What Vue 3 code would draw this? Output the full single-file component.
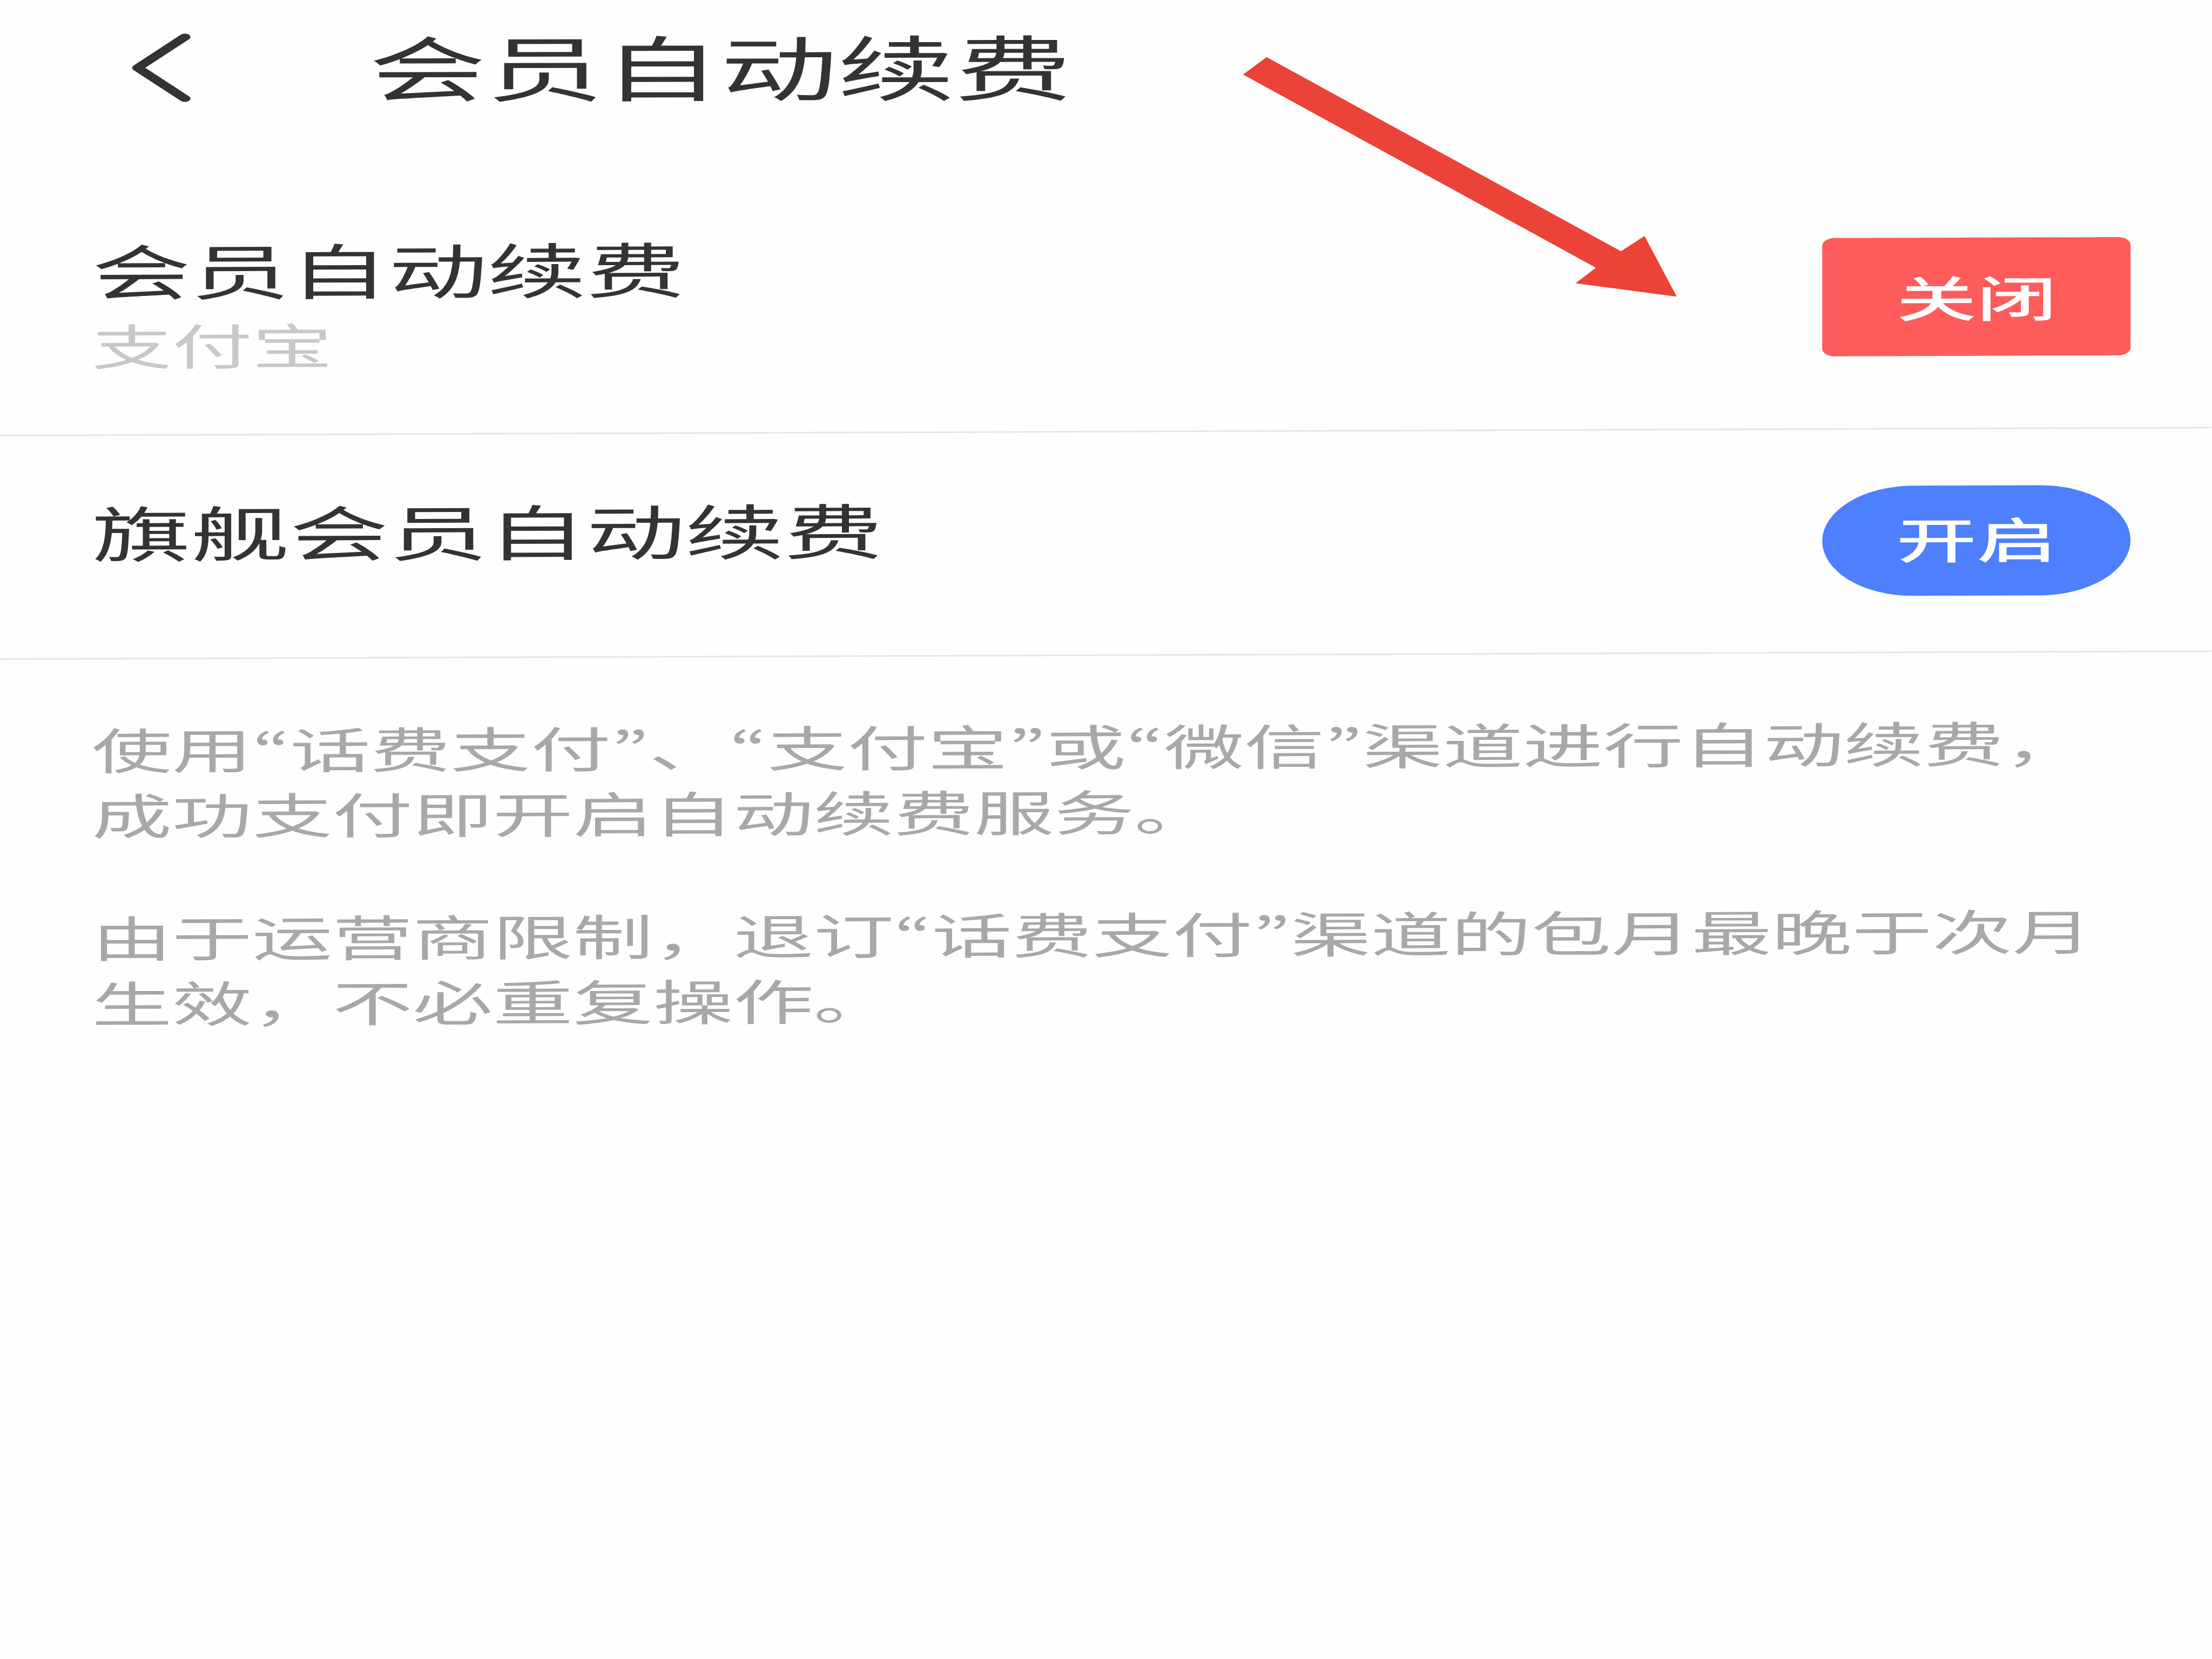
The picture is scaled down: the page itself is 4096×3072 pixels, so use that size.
<template>
    <div class="container">
        <div class="header">
            <svg class="back" viewBox="0 0 66 128" width="66" height="128">
                <polyline points="59.5,7 6.5,64 59.5,121" />
            </svg>
            <h1>会员自动续费</h1>
        </div>

        <div class="content">
            <div v-for="item in plans" :key="item.name" class="row" :class="item.type">
                <div class="info">
                    <p class="name">{{ item.name }}</p>
                    <p v-if="item.channel" class="channel">{{ item.channel }}</p>
                </div>
                <button class="btn">{{ item.action }}</button>
            </div>

            <div class="notes">
                <p v-for="(lines, i) in notes" :key="i">
                    <span v-for="line in lines" :key="line" class="line"><span v-for="(part, j) in splitQuotes(line)" :key="j" :class="{quote : isQuote(part)}">{{ part }}</span></span>
                </p>
            </div>
        </div>

        <!-- pointer over the close button -->
        <svg class="arrow" viewBox="2654 121 930 515">
            <polygon points="2705.2,122 3462,536.6 3512.3,504 3581.2,633.5 3364.9,605 3408.4,571.8 2654.9,159.2" />
        </svg>
    </div>
</template>

<script setup>
import { ref } from 'vue';

const plans = ref([
    { name: '会员自动续费', channel: '支付宝', action: '关闭', type: 'close' },
    { name: '旗舰会员自动续费', channel: '', action: '开启', type: 'open' },
]);

const notes = [
    ['使用“话费支付”、“支付宝”或“微信”渠道进行自动续费，', '成功支付即开启自动续费服务。'],
    ['由于运营商限制，退订“话费支付”渠道的包月最晚于次月', '生效，不必重复操作。'],
];

// quotes get their own span, the SC font only has them full width
const splitQuotes = (line) => line.split(/([“”])/).filter((part) => part);
const isQuote = (part) => part === '“' || part === '”';
</script>

<style>
body{
    margin: 0;
    background: #fefefe;
}
</style>

<style scoped>
.container{
    position: relative;
    width: 4096px;
    height: 3072px;
    overflow: hidden;
    background: #fefefe;
    font-family: "Noto Sans CJK SC", sans-serif;
    text-spacing-trim: space-all;
    color: #333;
}
h1, p{
    margin: 0;
    font-weight: 400;
    white-space: nowrap;
}
/* everything is stretched sideways and leans up a little to the right */
.header, .content{
    width: 2482.4px;
    box-sizing: border-box;
    transform-origin: 0 0;
}
.header{
    display: flex;
    align-items: center;
    height: 244px;
    padding-left: 148px;
    transform: matrix(1.65, -0.0026, 0, 1, 0, 0);
}
.back{
    margin-top: 8px;
    fill: none;
    stroke: #333;
    stroke-width: 12.5;
    stroke-linecap: round;
    stroke-linejoin: round;
}
h1{
    margin-left: 200px;
    font-size: 131.5px;
    line-height: 180px;
}
.content{
    transform: matrix(1.65, -0.0059, 0, 1, 0, 0);
}
.row{
    display: flex;
    justify-content: space-between;
    align-items: flex-start;
    box-sizing: border-box;
    padding: 0 91px 0 103px;
    border-bottom: 3px solid #e6e6e6;
}
.row.close{
    height: 564px;
}
.row.open{
    height: 414px;
}
.name{
    font-size: 111px;
    line-height: 150px;
}
.channel{
    font-size: 90px;
    line-height: 128px;
    color: #c8c8c8;
}
.close .info{
    padding-top: 180px;
}
.open .info{
    padding-top: 101px;
}
.btn{
    box-sizing: border-box;
    width: 346.5px;
    padding: 0;
    border: none;
    color: #fff;
    font-family: inherit;
    font-size: 90px;
    font-weight: 500;
    line-height: 130px;
}
.close .btn{
    height: 219px;
    margin-top: 209px;
    padding-bottom: 4px;
    border-radius: 14px;
    background: #fe5b5b;
}
.open .btn{
    height: 204px;
    margin-top: 104px;
    padding-bottom: 12px;
    border-radius: 102px;
    background: #4d7ffe;
}
.notes{
    display: flex;
    flex-direction: column;
    gap: 106px;
    padding: 104px 0 0 103px;
    font-size: 90px;
    line-height: 121px;
    color: #a8a8a8;
}
.line{
    display: block;
    height: 121px;
}
.quote{
    font-family: "Noto Sans CJK KR", "Noto Sans CJK SC", sans-serif;
}
.arrow{
    position: absolute;
    left: 2301px;
    top: 105px;
    width: 806.4px;
    height: 446.5px;
    fill: #eb4337;
}
</style>
